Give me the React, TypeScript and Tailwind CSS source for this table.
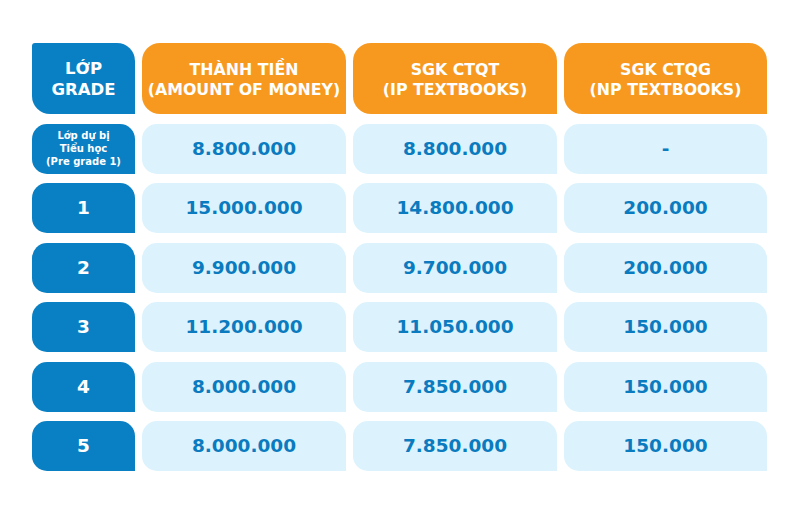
const rows = [
  { grade: null, amount: '8.800.000', ip: '8.800.000', np: '-' },
  { grade: '1', amount: '15.000.000', ip: '14.800.000', np: '200.000' },
  { grade: '2', amount: '9.900.000', ip: '9.700.000', np: '200.000' },
  { grade: '3', amount: '11.200.000', ip: '11.050.000', np: '150.000' },
  { grade: '4', amount: '8.000.000', ip: '7.850.000', np: '150.000' },
  { grade: '5', amount: '8.000.000', ip: '7.850.000', np: '150.000' },
]

const headers = [
  ['THÀNH TIỀN', '(AMOUNT OF MONEY)'],
  ['SGK CTQT', '(IP TEXTBOOKS)'],
  ['SGK CTQG', '(NP TEXTBOOKS)'],
]

export default function App() {
  return (
    <div className="w-[800px] h-[507px] bg-white pt-[43px] pl-[32px] font-['DejaVu_Sans',sans-serif] font-bold">
      <div className="grid grid-cols-[103px_204px_204px_203px] grid-rows-[71px_repeat(6,50px)] gap-x-[7px] gap-y-[9.5px]">
        {/* Header */}
        <div className="bg-[#0a80c4] rounded-tl-[3px] rounded-tr-[18px] rounded-bl-[18px] flex flex-col items-center justify-center text-white text-[16.5px] leading-[21px] pt-[1px]">
          <span>LỚP</span>
          <span>GRADE</span>
        </div>
        {headers.map(([a, b]) => (
          <div
            key={a}
            className="bg-[#f7991f] rounded-tl-[18px] rounded-tr-[18px] rounded-bl-[18px] flex flex-col items-center justify-center text-white text-[15.8px] leading-[20px] pt-[2px]"
          >
            <span>{a}</span>
            <span>{b}</span>
          </div>
        ))}

        {/* Body */}
        {rows.map((r, i) => (
          <div key={i} className="contents">
            <div className="bg-[#0a80c4] rounded-tl-[15px] rounded-tr-[15px] rounded-bl-[15px] flex flex-col items-center justify-center text-white">
              {r.grade ? (
                <span className="text-[18.5px]">{r.grade}</span>
              ) : (
                <>
                  <span className="text-[10px] leading-[13px]">Lớp dự bị</span>
                  <span className="text-[10px] leading-[13px]">Tiểu học</span>
                  <span className="text-[10px] leading-[13px]">(Pre grade 1)</span>
                </>
              )}
            </div>
            {[r.amount, r.ip, r.np].map((v, j) => (
              <div
                key={j}
                className="bg-[#dcf3fd] rounded-tl-[15px] rounded-tr-[15px] rounded-bl-[15px] flex items-center justify-center text-[#0b7bbf] text-[18.5px]"
              >
                {v}
              </div>
            ))}
          </div>
        ))}
      </div>
    </div>
  )
}
